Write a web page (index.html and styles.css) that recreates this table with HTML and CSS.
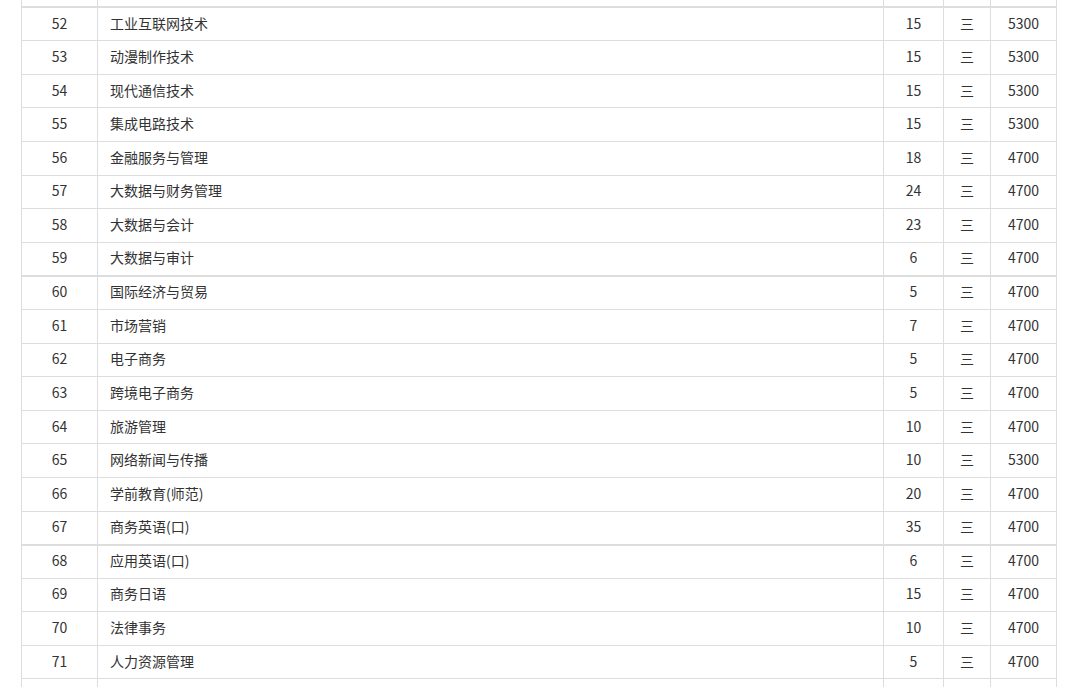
FILE: index.html
```html
<!DOCTYPE html>
<html lang="zh-CN">
<head>
<meta charset="utf-8">
<title>专业收费表</title>
<link rel="stylesheet" href="styles.css">
</head>
<body>
<div class="wrap">
<table class="fees">
<colgroup>
<col class="c-no"><col class="c-name"><col class="c-num"><col class="c-yr"><col class="c-fee">
</colgroup>
<tbody>
<tr class="lead"><td></td><td class="name"></td><td></td><td></td><td></td></tr>
<tr class="sep"><td>52</td><td class="name">工业互联网技术</td><td>15</td><td>三</td><td>5300</td></tr>
<tr><td>53</td><td class="name">动漫制作技术</td><td>15</td><td>三</td><td>5300</td></tr>
<tr><td>54</td><td class="name">现代通信技术</td><td>15</td><td>三</td><td>5300</td></tr>
<tr><td>55</td><td class="name">集成电路技术</td><td>15</td><td>三</td><td>5300</td></tr>
<tr><td>56</td><td class="name">金融服务与管理</td><td>18</td><td>三</td><td>4700</td></tr>
<tr><td>57</td><td class="name">大数据与财务管理</td><td>24</td><td>三</td><td>4700</td></tr>
<tr><td>58</td><td class="name">大数据与会计</td><td>23</td><td>三</td><td>4700</td></tr>
<tr><td>59</td><td class="name">大数据与审计</td><td>6</td><td>三</td><td>4700</td></tr>
<tr class="sep"><td>60</td><td class="name">国际经济与贸易</td><td>5</td><td>三</td><td>4700</td></tr>
<tr><td>61</td><td class="name">市场营销</td><td>7</td><td>三</td><td>4700</td></tr>
<tr><td>62</td><td class="name">电子商务</td><td>5</td><td>三</td><td>4700</td></tr>
<tr><td>63</td><td class="name">跨境电子商务</td><td>5</td><td>三</td><td>4700</td></tr>
<tr><td>64</td><td class="name">旅游管理</td><td>10</td><td>三</td><td>4700</td></tr>
<tr><td>65</td><td class="name">网络新闻与传播</td><td>10</td><td>三</td><td>5300</td></tr>
<tr><td>66</td><td class="name">学前教育(师范)</td><td>20</td><td>三</td><td>4700</td></tr>
<tr><td>67</td><td class="name">商务英语(口)</td><td>35</td><td>三</td><td>4700</td></tr>
<tr class="sep"><td>68</td><td class="name">应用英语(口)</td><td>6</td><td>三</td><td>4700</td></tr>
<tr><td>69</td><td class="name">商务日语</td><td>15</td><td>三</td><td>4700</td></tr>
<tr><td>70</td><td class="name">法律事务</td><td>10</td><td>三</td><td>4700</td></tr>
<tr><td>71</td><td class="name">人力资源管理</td><td>5</td><td>三</td><td>4700</td></tr>
<tr class="tail"><td></td><td class="name"></td><td></td><td></td><td></td></tr>
</tbody>
</table>
</div>
</body>
</html>
```

FILE: styles.css
```css
html, body {
  margin: 0;
  padding: 0;
  background: #ffffff;
  overflow: hidden;
}
body {
  font-family: "Noto Sans CJK SC", "Noto Sans", sans-serif;
  font-size: 14px;
  color: #333333;
}
.wrap {
  padding-left: 21px;
  margin-top: -27px;
}
.fees {
  border-collapse: collapse;
  table-layout: fixed;
  width: 1035px;
}
.c-no { width: 76px; }
.c-name { width: 786px; }
.c-num { width: 60px; }
.c-yr { width: 47px; }
.c-fee { width: 66px; }
.fees td {
  border: 1px solid #dddddd;
  height: 33.6px;
  padding: 0 8px 3px;
  box-sizing: border-box;
  text-align: center;
  vertical-align: middle;
  line-height: 20px;
  white-space: nowrap;
}
.fees td.name {
  text-align: left;
  padding-left: 12px;
}
.fees tr.sep td {
  border-top: 2px solid #dddddd;
}
```
